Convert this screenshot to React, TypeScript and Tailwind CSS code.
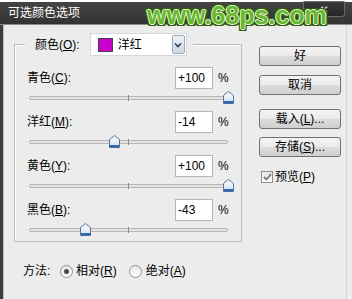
import React from "react";

const FONT = '"Liberation Sans", "Noto Sans CJK SC", sans-serif';

type Row = { label: string; key: string; value: number };

const rows: Row[] = [
  { label: "青色", key: "C", value: 100 },
  { label: "洋红", key: "M", value: -14 },
  { label: "黄色", key: "Y", value: 100 },
  { label: "黑色", key: "B", value: -43 },
];

function fmt(v: number) {
  return v > 0 ? `+${v}` : `${v}`;
}

// Slider thumb, house shaped
function Thumb() {
  return (
    <svg width="11" height="13" viewBox="0 0 11 13">
      <defs>
        <linearGradient id="tg" x1="0" y1="0" x2="0" y2="1">
          <stop offset="0" stopColor="#ffffff" />
          <stop offset="1" stopColor="#cfe0f0" />
        </linearGradient>
      </defs>
      <path d="M0.5 4.5 L5.5 0.5 L10.5 4.5 L10.5 12.5 L0.5 12.5 Z" fill="url(#tg)" stroke="#5a7391" />
      <rect x="1" y="10" width="9" height="2.5" fill="#2f6ab0" />
    </svg>
  );
}

function Slider({ value }: { value: number }) {
  const pos = ((value + 100) / 200) * 199;
  return (
    <div className="relative h-[18px] ml-[2px] w-[199px] flex items-center">
      <div className="w-full h-[4px] rounded-full border border-[#b4b4b4] bg-[#e4e4e4]" />
      <div className="absolute left-[99px] top-[6px] w-px h-[6px] bg-[#8a8a8a]" />
      <div className="absolute top-[2px]" style={{ left: pos - 5.5 }}>
        <Thumb />
      </div>
    </div>
  );
}

function Btn({ children, className = "" }: { children: React.ReactNode; className?: string }) {
  return (
    <div
      className={`w-[82px] h-[20px] rounded-[3px] border border-[#707070] bg-[linear-gradient(#f4f4f4_0%,#ebebeb_48%,#dcdcdc_52%,#cfcfcf_100%)] flex items-center justify-center text-[12px] text-black ${className}`}
    >
      {children}
    </div>
  );
}

function Radio({ checked }: { checked?: boolean }) {
  return (
    <div className="w-[13px] h-[13px] rounded-full border border-[#8e8f8f] bg-[linear-gradient(#e8e8e8,#ffffff)] flex items-center justify-center">
      {checked && <div className="w-[5px] h-[5px] rounded-full bg-[#4a4a4a]" />}
    </div>
  );
}

export default function App() {
  return (
    <div
      className="w-[352px] h-[299px] relative overflow-hidden bg-[#ececec] flex flex-col"
      style={{ fontFamily: FONT }}
    >
      <div className="h-[2px] bg-white" />
      {/* Title bar */}
      <div className="h-[22px] flex items-center bg-[linear-gradient(#444444,#333333)] text-white text-[12px] pl-[8px]">
        <span>可选颜色选项</span>
        <div className="ml-auto mr-[7px] self-start -mt-[1px] w-[42px] h-[16px] rounded-b-[3px] border border-[#6b6b6b] bg-[linear-gradient(#3a3a3a,#262626)] flex items-center justify-center text-[#d8d8d8] text-[10px] font-bold">
          ✕
        </div>
      </div>
      <div className="h-px bg-[#8a8a8a]" />

      {/* Body */}
      <div className="flex-1 flex border-l-[3px] border-[#3e3e3e]">
        <div className="w-px bg-[#bdbdbd]" />
        <div className="flex flex-col pl-[10px]">
          {/* Group box */}
          <div className="relative mt-[19px] w-[228px] border border-[#bcbcbc] shadow-[inset_1px_1px_0_#ffffff] pt-[22px] pb-[2px] pl-[12px] flex flex-col gap-[4px]">
            <div className="absolute -top-[12px] left-[10px] bg-[#ececec] pl-[10px] pr-[6px] flex items-center gap-[10px] text-[12px]">
              <span>
                颜色(<span className="underline">O</span>):
              </span>
              <div className="w-[97px] h-[23px] bg-white border border-[#d8d8d8] flex items-center">
                <div className="ml-[7px] w-[15px] h-[14px] bg-[#cc00cc] border border-[#444]" />
                <span className="ml-[5px]">洋红</span>
                <div className="ml-auto mr-[1px] w-[13px] h-[19px] border border-[#9aaabd] rounded-[2px] bg-[linear-gradient(#eef2f7,#cdd7e3)] flex items-center justify-center">
                  <svg width="8" height="6" viewBox="0 0 8 6">
                    <path d="M1 1.5 L4 4.5 L7 1.5" fill="none" stroke="#2c3e66" strokeWidth="1.6" />
                  </svg>
                </div>
              </div>
            </div>
            {rows.map((r) => (
              <div key={r.key} className="flex flex-col">
                <div className="flex items-center h-[22px] text-[12px]">
                  <span className="w-[148px]">
                    {r.label}(<span className="underline">{r.key}</span>):
                  </span>
                  <div className="w-[38px] h-[22px] bg-white border border-[#b5b5b5] flex items-center pl-[2px] text-[12px]">
                    {fmt(r.value)}
                  </div>
                  <span className="ml-[5px]">%</span>
                </div>
                <Slider value={r.value} />
              </div>
            ))}
          </div>

          {/* Method */}
          <div className="mt-[21px] h-[16px] flex items-center text-[12px] ml-[9px]">
            <span className="w-[37px]">方法:</span>
            <Radio checked />
            <span className="ml-[3px]">
              相对(<span className="underline">R</span>)
            </span>
            <div className="ml-[12px]">
              <Radio />
            </div>
            <span className="ml-[4px]">
              绝对(<span className="underline">A</span>)
            </span>
          </div>
        </div>

        {/* Buttons */}
        <div className="flex flex-col ml-[17px] pt-[21px]">
          <Btn>好</Btn>
          <Btn className="mt-[9px]">取消</Btn>
          <Btn className="mt-[14px]">
            <span>
              载入(<span className="underline">L</span>)...
            </span>
          </Btn>
          <Btn className="mt-[8px]">
            <span>
              存储(<span className="underline">S</span>)...
            </span>
          </Btn>
          <div className="mt-[11px] ml-[2px] flex items-center text-[12px]">
            <div className="w-[12px] h-[12px] border border-[#8e8f8f] bg-[linear-gradient(#e6e6e6,#ffffff)] flex items-center justify-center">
              <svg width="9" height="8" viewBox="0 0 9 8">
                <path d="M1 4 L3.5 6.5 L8 1" fill="none" stroke="#6f7d6f" strokeWidth="1.8" />
              </svg>
            </div>
            <span className="ml-[2px]">
              预览(<span className="underline">P</span>)
            </span>
          </div>
        </div>
        <div className="ml-auto w-px bg-[#d4d4d4] mr-[5px]" />
      </div>

      {/* Watermark */}
      <div className="absolute left-[147px] top-[3px] text-[25px] leading-none font-bold text-[#66b82c] [text-shadow:1px_0_0_#eaf5d8,-1px_0_0_#eaf5d8,0_1px_0_#eaf5d8,0_-1px_0_#eaf5d8,2px_0_0_#2f5c10,-2px_0_0_#2f5c10,0_2px_0_#2f5c10,0_-2px_0_#2f5c10,2px_2px_0_#2f5c10,-2px_-2px_0_#2f5c10,2px_-2px_0_#2f5c10,-2px_2px_0_#2f5c10]">
        www.68ps.com
      </div>
    </div>
  );
}
